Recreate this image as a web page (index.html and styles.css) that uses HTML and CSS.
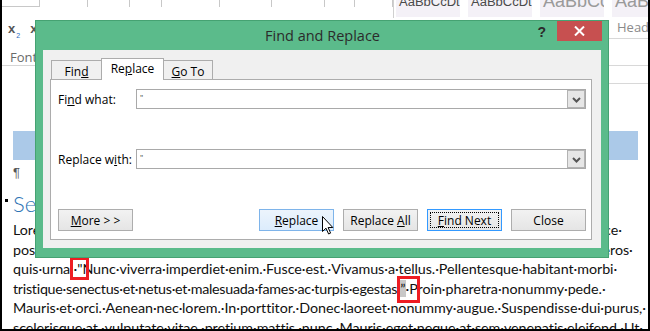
FILE: index.html
```html
<!DOCTYPE html>
<html>
<head>
<meta charset="utf-8">
<link rel="stylesheet" href="styles.css">
</head>
<body>
<div class="screen">
  <header class="ribbon">
    <div class="rb-left">
      <div class="rb-strip">
        <span class="seg w40"></span>
        <span class="seg w48"></span>
        <span class="seg w42"></span>
        <span class="seg w32"></span>
        <span class="seg w58"></span>
        <span class="seg w52"></span>
        <span class="seg w53"></span>
        <span class="seg w30"></span>
        <span class="seg w38"></span>
      </div>
      <div class="rb-script"><span class="xb">x</span><span class="sub">2</span><span class="xb xs">x</span></div>
      <div class="rb-label">Font</div>
    </div>
    <div class="rb-styles">
      <div class="style"><div class="prev">AaBbCcDt</div></div>
      <div class="style"><div class="prev">AaBbCcDt</div></div>
      <div class="style"><div class="prev big">AaBbCc</div></div>
      <div class="style last"><div class="prev big">AaBbC</div><div class="name">Headi</div></div>
    </div>
  </header>
  <div class="right-lines"><span></span><span></span><span></span></div>

  <main class="doc">
    <div class="band"></div>
    <div class="pilcrow">¶</div>
    <div class="heading"><span class="bullet"></span>Section·heading</div>
    <div class="text">
      <div class="line">Lorem·ipsum·dolor·sit·amet,·consectetuer·adipiscing·elit.·Maecenas·porttitor·congue·massa.·Fusce·</div>
      <div class="line">posuere,·magna·sed·pulvinar·ultricies,·purus·lectus·malesuada·libero,·sit·amet·commodo·magna·eros·</div>
      <div class="line">quis·urna.·<span class="mark m1">"</span>Nunc·viverra·imperdiet·enim.·Fusce·est.·Vivamus·a·tellus.·Pellentesque·habitant·morbi·</div>
      <div class="line"><span class="tight">tristique·senectus·et·netus·et·malesuada·fames·ac·turpis·egestas.</span><span class="mark m2">”</span>·Proin·pharetra·nonummy·pede.·</div>
      <div class="line">Mauris·et·orci.·Aenean·nec·lorem.·In·porttitor.·Donec·laoreet·nonummy·augue.·Suspendisse·dui·purus,·</div>
      <div class="line">scelerisque·at,·vulputate·vitae,·pretium·mattis,·nunc.·Mauris·eget·neque·at·sem·venenatis·eleifend.·Ut·</div>
    </div>
  </main>

  <section class="dialog">
    <div class="titlebar">
      <span></span>
      <span class="title">Find and Replace</span>
      <div class="controls">
        <span class="help">?</span>
        <span class="close"><svg width="11" height="10" viewBox="0 0 11 10"><path d="M1 0.5 L10 9.5 M10 0.5 L1 9.5" stroke="#fff" stroke-width="2" fill="none"/></svg></span>
      </div>
    </div>
    <div class="dbody">
      <div class="tabs">
        <div class="tab">Fin<u>d</u></div>
        <div class="tab active">Re<u>p</u>lace</div>
        <div class="tab"><u>G</u>o To</div>
      </div>
      <div class="panel">
        <div class="fields">
          <div class="field">
            <span class="label">Fi<u>n</u>d what:</span>
            <div class="combo"><span class="val">"</span><span class="drop"><svg width="9" height="6" viewBox="0 0 9 6"><path d="M1 1 L4.5 4.5 L8 1" stroke="#555" stroke-width="2" fill="none"/></svg></span></div>
          </div>
          <div class="field">
            <span class="label">Replace w<u>i</u>th:</span>
            <div class="combo"><span class="val">"</span><span class="drop"><svg width="9" height="6" viewBox="0 0 9 6"><path d="M1 1 L4.5 4.5 L8 1" stroke="#555" stroke-width="2" fill="none"/></svg></span></div>
          </div>
        </div>
        <div class="buttons">
          <button class="btn"><u>M</u>ore &gt; &gt;</button>
          <div class="btn-group">
            <button class="btn hover"><u>R</u>eplace</button>
            <button class="btn">Replace <u>A</u>ll</button>
            <button class="btn focus"><u>F</u>ind Next</button>
            <button class="btn">Close</button>
          </div>
        </div>
      </div>
    </div>
  </section>

  <svg class="cursor" width="12" height="19" viewBox="0 0 12 19"><path d="M0.5 0.5 L0.5 15.5 L4 12.2 L6.6 18 L8.6 17.1 L6.1 11.5 L10.8 11.5 Z" fill="#fff" stroke="#000" stroke-width="1" stroke-linejoin="miter"/></svg>
</div>
</body>
</html>
```
FILE: styles.css
```css
* { box-sizing: border-box; }
body { margin: 0; background: #fff; }

.screen {
  position: relative;
  width: 650px;
  height: 331px;
  overflow: hidden;
  background: #fff;
  border-left: 2px solid #000;
  border-right: 2px solid #000;
  border-bottom: 2px solid #000;
  font-family: "Open Sans", "Noto Sans", sans-serif;
}

/* ribbon */
.ribbon {
  height: 66px;
  border-bottom: 1px solid #d5d5d5;
  display: flex;
  margin-left: -2px;
}
.rb-left { width: 395px; position: relative; }
.rb-strip { display: flex; height: 7px; }
.seg { height: 7px; border-right: 1px solid #c8c8c8; }
.seg.w40 { width: 40px; border-bottom: 1px solid #c8c8c8; }
.w48 { width: 48px; }
.w42 { width: 42px; }
.w32 { width: 32px; }
.w58 { width: 58px; }
.w52 { width: 52px; }
.w53 { width: 53px; }
.w30 { width: 30px; }
.w38 { width: 38px; }
.rb-script {
  margin: 15px 0 0 8px;
  height: 14px;
  display: flex;
  align-items: flex-start;
  font-family: "Liberation Sans", sans-serif;
  font-size: 13px;
  line-height: 13px;
  color: #555;
}
.xb { font-weight: bold; }
.sub { font-size: 7px; color: #2b6cc4; margin-top: 7px; margin-left: 1px; }
.xs { margin-left: 10px; }
.rb-label {
  margin: 14px 0 0 10px;
  font-size: 13px;
  line-height: 14px;
  color: #6a6a6a;
  font-family: "Open Sans", sans-serif;
}
.rb-styles {
  flex: 1;
  display: flex;
  gap: 8px;
  padding-left: 2px;
  border-left: 1px solid #d0d0d0;
  height: 18px;
}
.style { width: 64px; flex: none; height: 17px; background: #f4f1f7; position: relative; }
.prev {
  height: 17px;
  overflow: hidden;
  font-family: "Liberation Sans", sans-serif;
  font-size: 13px;
  line-height: 4px;
  color: #4a4a4a;
  padding-left: 3px;
  white-space: nowrap;
}
.prev.big { font-size: 18px; line-height: 2px; color: #9a9a9a; }
.name {
  position: absolute;
  left: 5px;
  top: 18px;
  font-size: 13px;
  color: #8a8a8a;
  white-space: nowrap;
}
.right-lines {
  position: absolute;
  left: 607px;
  top: 38px;
  width: 45px;
  display: flex;
  flex-direction: column;
}
.right-lines span { display: block; height: 1px; background: #d8d8d8; }
.right-lines span:nth-child(2) { margin-top: 26px; }
.right-lines span:nth-child(3) { margin-top: 17px; }

/* document */
.doc { padding: 65px 0 0 11px; color: #111; }
.band { width: 625px; height: 29px; background: #abc9e8; }
.pilcrow {
  height: 22px;
  padding-top: 4px;
  font-family: "Liberation Sans", sans-serif;
  font-size: 13px;
  line-height: 18px;
  color: #555;
}
.heading {
  position: relative;
  height: 38px;
  padding-top: 8px;
  font-family: "Lato", "Open Sans", sans-serif;
  font-weight: 300;
  font-size: 22px;
  line-height: 28px;
  color: #2e74b5;
}
.bullet {
  position: absolute;
  left: -8px;
  top: 17px;
  width: 3px;
  height: 3px;
  background: #000;
}
.text {
  font-family: "Lato", "Open Sans", sans-serif;
  font-size: 14.3px;
  line-height: 19.6px;
  color: #111;
  letter-spacing: -0.05px;
}
.line { white-space: nowrap; height: 19.6px; }
.tight { letter-spacing: -0.27px; }
.mark { position: relative; }
.mark::after {
  content: "";
  position: absolute;
  border: 3px solid #ee1d23;
}
.m1::after { left: -7px; right: -7px; top: -3px; bottom: -3px; }
.m2 { background: #c8c8c8; }
.m2::after { left: -3px; right: -14px; top: -4px; bottom: -6px; }

/* dialog */
.dialog {
  position: absolute;
  z-index: 5;
  left: 33px;
  top: 20px;
  width: 574px;
  height: 238px;
  border: 1px solid #45a272;
  background: #5bbb8b;
  padding: 0 7px 9px 7px;
}
.titlebar {
  height: 29px;
  display: grid;
  grid-template-columns: 1fr auto 1fr;
  align-items: start;
  margin-right: -1px;
}
.title {
  font-size: 14.5px;
  line-height: 29px;
  color: #2b2b2b;
  white-space: nowrap;
}
.controls { display: flex; justify-content: flex-end; align-items: flex-start; gap: 11px; }
.help {
  font-family: "Liberation Sans", sans-serif;
  font-weight: bold;
  font-size: 14px;
  line-height: 20px;
  margin-top: 1px;
  color: #2b2b2b;
}
.close {
  width: 45px;
  height: 20px;
  background: #c75050;
  display: flex;
  align-items: center;
  justify-content: center;
}
.dbody {
  height: 198px;
  background: #f0f0f0;
  padding: 8px 9px 8px 7px;
  font-size: 12px;
  color: #000;
}
.tabs {
  display: flex;
  align-items: flex-end;
  height: 22px;
  margin-bottom: -1px;
  margin-left: 1px;
  position: relative;
  z-index: 1;
}
.tab {
  width: 51px;
  height: 20px;
  border: 1px solid #acacac;
  background: #f0f0f0;
  text-align: center;
  line-height: 19px;
  padding-top: 1px;
}
.tab + .tab { margin-left: -1px; }
.tab.active {
  width: 63px;
  height: 22px;
  background: #fff;
  border-bottom: none;
  line-height: 20px;
  padding-top: 0;
}
.tab:last-child { width: 50px; }
.panel {
  height: 161px;
  background: #fff;
  border: 1px solid #acacac;
  padding: 9px 5px 0 7px;
  display: flex;
  flex-direction: column;
  gap: 40px;
}
.fields { display: flex; flex-direction: column; gap: 40px; }
.field {
  display: grid;
  grid-template-columns: 78px 1fr;
  align-items: center;
  height: 20px;
}
.label { white-space: nowrap; }
.combo {
  height: 20px;
  border: 1px solid #a9a9a9;
  display: flex;
  justify-content: space-between;
}
.val { font-size: 8px; line-height: 8px; padding: 3px 0 0 3px; color: #444; }
.drop {
  width: 18px;
  height: 18px;
  background: #e6e6e6;
  border: 1px solid #b3b3b3;
  display: flex;
  align-items: center;
  justify-content: center;
  padding-top: 1px;
}
.buttons { display: flex; justify-content: space-between; }
.btn-group { display: flex; gap: 9px; }
.btn {
  width: 75px;
  height: 22px;
  border: 1px solid #adadad;
  background: linear-gradient(#f2f2f2, #e5e5e5);
  font-family: "Open Sans", "Noto Sans", sans-serif;
  font-size: 12px;
  color: #000;
  padding: 0;
  line-height: 19px;
}
.btn.hover {
  border-color: #7eb4ea;
  background: linear-gradient(#ecf4fc, #dcecfc);
}
.btn.focus {
  border-color: #3399ff;
  outline: 1px dotted #000;
  outline-offset: -4px;
}
.cursor { position: absolute; z-index: 6; left: 320px; top: 216px; }
```
